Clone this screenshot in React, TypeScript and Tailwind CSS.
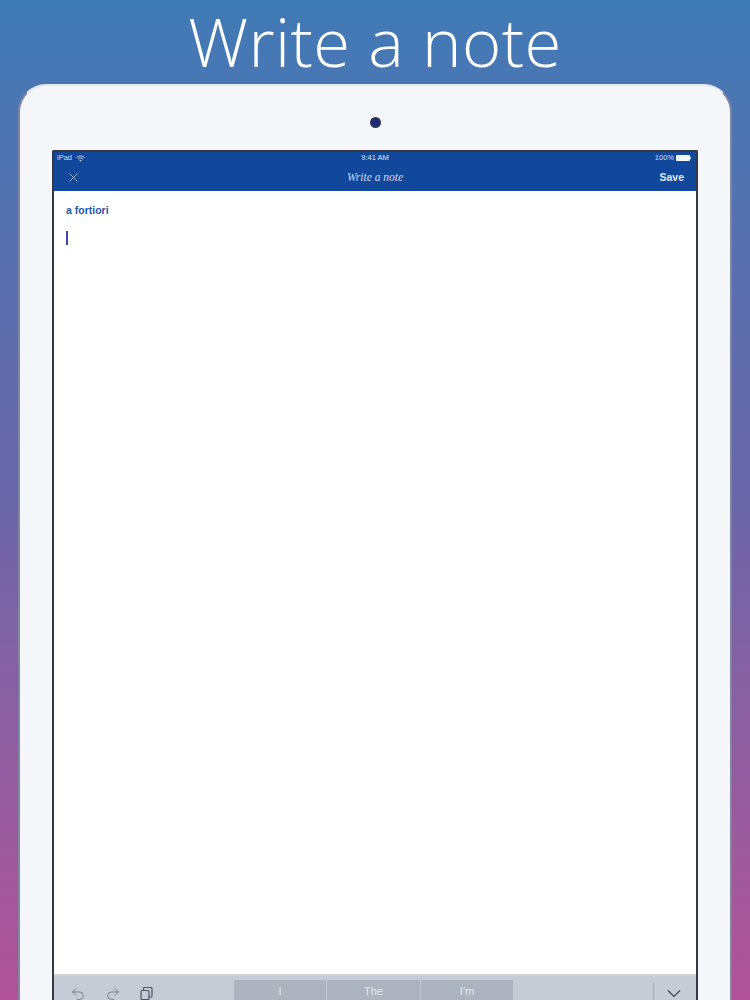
import { Redo2, Undo2, X } from "lucide-react";

function Wifi() {
  return (
    <svg width="9" height="7" viewBox="0 0 18 14" fill="none" stroke="#cfdcf0" strokeWidth="2">
      <path d="M1 5c4.500-4 11.500-4 16 0" />
      <path d="M4 8c3-2.600 7-2.600 10 0" />
      <path d="M9 13l-2.500-2.500c1.500-1 3.500-1 5 0z" fill="#cfdcf0" stroke="none" />
    </svg>
  );
}

function Battery() {
  return (
    <div className="flex items-center">
      <div className="h-[6px] w-[14px] rounded-[1px] bg-[#f4f7fb]" />
      <div className="h-[2px] w-px bg-[#cfdcf0]" />
    </div>
  );
}

function CopyIcon() {
  return (
    <svg width="13" height="13" viewBox="0 0 13 13" fill="none" stroke="#4f5663" strokeWidth="1.200">
      <rect x="1" y="3.500" width="8" height="9" rx="1" />
      <path d="M3.500 3.500V1.500a1 1 0 0 1 1-1H11a1 1 0 0 1 1 1V9a1 1 0 0 1-1 1H9" />
    </svg>
  );
}

function Suggestion({ label, width }: { label: string; width: string }) {
  return (
    <div className={`flex h-full items-start justify-center bg-[#adb4bf] pt-[4px] text-[11px] leading-[14px] text-[#e6e9ee] ${width}`}>
      {label}
    </div>
  );
}

export default function App() {
  return (
    <div className="flex h-[1000px] w-[750px] flex-col overflow-hidden bg-gradient-to-b from-[#3f7ab6] via-[#6a66a8] via-50% to-[#b05297] font-['Liberation_Sans',sans-serif]">
      <div className="flex h-[84px] shrink-0 items-start justify-center">
        <h1 className="font-['Open_Sans',sans-serif] text-[67px] leading-[82px] font-light tracking-[0.4px] text-white">
          Write a note
        </h1>
      </div>

      <div className="mx-[18px] flex min-h-0 flex-1 flex-col rounded-t-[28px] border-x-2 border-t-2 border-x-[#7f86a3] border-t-[#e3e8f0] bg-[#f4f6f9]">
        <div className="flex h-[64px] shrink-0 items-center justify-center pt-[8px]">
          <div className="size-[11px] rounded-full border-2 border-[#2b3350] bg-[#1d2a80]" />
        </div>

        <div className="mx-[32px] flex min-h-0 flex-1 flex-col rounded-t-[2px] border-x-2 border-t-2 border-[#333842] bg-white">
          <div className="h-[39px] shrink-0 bg-[#12489c] text-white">
            <div className="relative flex h-[12px] items-center justify-between pr-[5px] pl-[3px] text-[7.500px] leading-[12px] text-[#cfdcf0]">
              <div className="flex items-center gap-[4px]">
                <span>iPad</span>
                <Wifi />
              </div>
              <span className="absolute left-1/2 -translate-x-1/2 text-[#dfe7f3]">9:41 AM</span>
              <div className="flex items-center gap-[2px]">
                <span>100%</span>
                <Battery />
              </div>
            </div>
            <div className="relative flex h-[27px] items-center justify-between pr-[12px] pl-[12px]">
              <X size={15} strokeWidth={1} className="text-[#dfe7f3]" />
              <span className="absolute left-1/2 -translate-x-1/2 font-['Liberation_Serif',serif] text-[11.500px] text-[#c9d8ee] italic">
                Write a note
              </span>
              <span className="text-[10.500px] font-bold text-[#dfe7f3]">Save</span>
            </div>
          </div>

          <div className="min-h-0 flex-1 px-[12px] pt-[13px]">
            <div className="text-[10.500px] leading-[13px] font-bold text-[#1f56ad]">a fortiori</div>
            <div className="mt-[14px] h-[14px] w-[1.500px] bg-[#3a4aa5]" />
          </div>

          <div className="flex h-[26px] shrink-0 border-t-2 border-[#d0d2d6] bg-[#c6cbd5]">
            <div className="flex w-[180px] shrink-0 gap-[19px] pt-[10px] pl-[16px] text-[#5f6673]">
              <Undo2 size={16} strokeWidth={1.100} />
              <Redo2 size={16} strokeWidth={1.100} />
              <div className="mt-[1px]">
                <CopyIcon />
              </div>
            </div>
            <div className="flex h-full gap-px pt-[4px]">
              <Suggestion label="I" width="w-[92px]" />
              <Suggestion label="The" width="w-[93px]" />
              <Suggestion label="I'm" width="w-[92px]" />
            </div>
            <div className="mt-[7px] ml-auto flex w-[43px] border-l border-[#a9aeb8] pt-[6px] pl-[13px]">
              <svg width="14" height="9" viewBox="0 0 14 9" fill="none" stroke="#3d434f" strokeWidth="1.200">
                <path d="M1 1.500l6 6 6-6" />
              </svg>
            </div>
          </div>
        </div>
      </div>
    </div>
  );
}
